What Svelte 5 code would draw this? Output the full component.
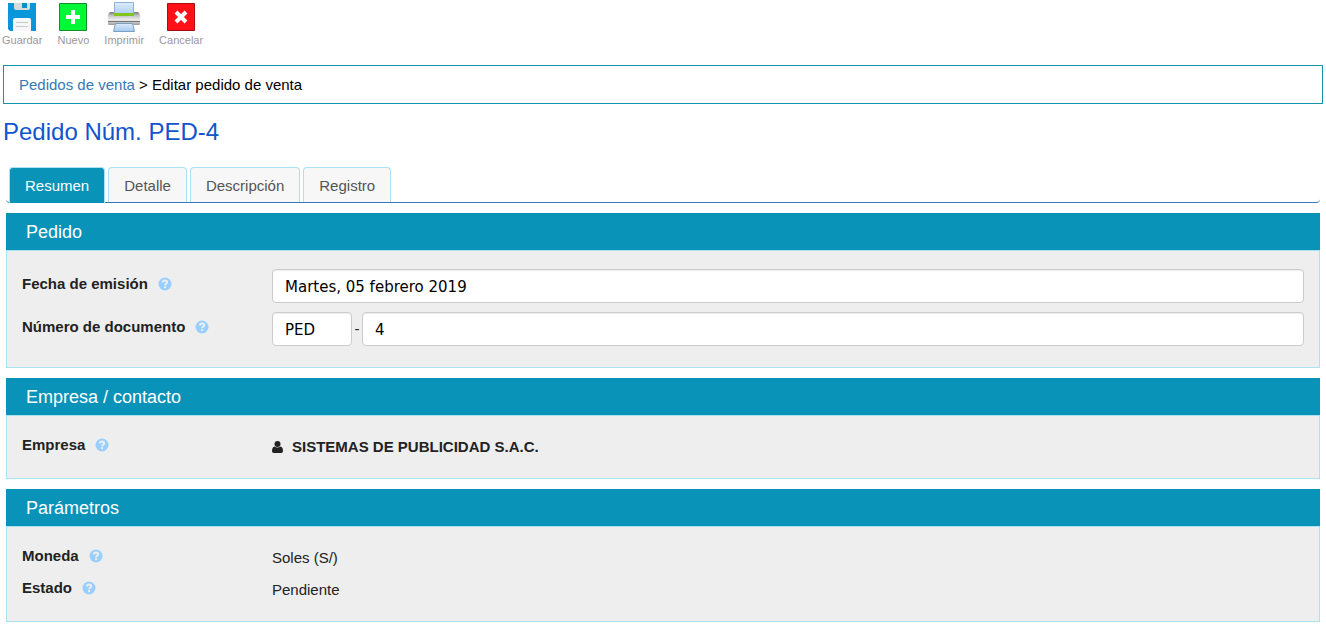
<script>
  const tabs = ['Resumen', 'Detalle', 'Descripción', 'Registro'];
  let active = $state('Resumen');
  let fecha = $state('Martes, 05 febrero 2019');
  let serie = $state('PED');
  let numero = $state('4');
</script>

{#snippet help()}
  <svg class="help" viewBox="0 0 14 14" aria-hidden="true">
    <circle cx="7" cy="7" r="6.5" fill="#99cfff" />
    <path d="M4.9 5.4C5 4 5.900 3.500 7 3.500c1.300 0 2.100.7 2.100 1.700 0 1.500-2 1.500-2 3.100" fill="none" stroke="#eee" stroke-width="2" />
    <rect x="6.100" y="9.200" width="2" height="1.900" fill="#eee" />
  </svg>
{/snippet}

<header class="toolbar">
  <button type="button">
    <svg viewBox="0 0 32 32" aria-hidden="true">
      <path d="M2 3h28v28H4l-2-2z" fill="#0a97d9" />
      <path d="M8 3h16v5q0 2-2 2H10q-2 0-2-2z" fill="#d5dadd" />
      <path d="M16 3h5v5h-5z" fill="#0a8fcb" />
      <path d="M7 20q0-2 2-2h14q2 0 2 2v11H7z" fill="#f6f7f8" />
      <path d="M10 22.500h12M10 26.500h12" stroke="#c5cbcf" />
      <path d="M3 28h1v1H3zM28 28h1v1h-1z" fill="#07679b" />
    </svg>
    Guardar
  </button>
  <button type="button">
    <svg viewBox="0 0 32 32" aria-hidden="true">
      <path d="M2.500 3.500h27v27h-27z" fill="#00f837" stroke="#168c2f" />
      <path d="M14 10h4v5h5v4h-5v5h-4v-5H9v-4h5z" fill="#fff" />
    </svg>
    Nuevo
  </button>
  <button type="button">
    <svg viewBox="0 0 32 32" aria-hidden="true">
      <defs>
        <linearGradient id="paper" x2="0" y2="1">
          <stop stop-color="#dcebfa" /><stop offset="1" stop-color="#a3c9ee" />
        </linearGradient>
        <linearGradient id="case" x2="0" y2="1">
          <stop stop-color="#777" /><stop offset=".25" stop-color="#c0c0c0" />
          <stop offset=".6" stop-color="#eee" /><stop offset="1" stop-color="#999" />
        </linearGradient>
      </defs>
      <path d="M6.500 2.500h19v14h-19z" fill="url(#paper)" stroke="#8fb2d6" />
      <path d="M2 12h4v4h20v-4h4q2 1 2 4v8q0 1-1 1H1q-1 0-1-1v-8q0-3 2-4z" fill="url(#case)" />
      <path d="M6 13h20v3H6z" fill="#82c51c" />
      <path d="M0 21.500h32" stroke="#777" />
      <path d="M7.500 23.500h17l2 8h-21z" fill="url(#paper)" stroke="#7b9fc5" />
    </svg>
    Imprimir
  </button>
  <button type="button">
    <svg viewBox="0 0 32 32" aria-hidden="true">
      <path d="M2.500 3.500h27v27h-27z" fill="#ff1117" stroke="#a80d11" />
      <path d="M11 12l10 10M21 12L11 22" stroke="#fff" stroke-width="4" />
    </svg>
    Cancelar
  </button>
</header>

<nav class="breadcrumb" aria-label="Ruta">
  <a href="#pedidos">Pedidos de venta</a> &gt; Editar pedido de venta
</nav>

<h1>Pedido Núm. PED-4</h1>

<main>
  <div class="tabs" role="tablist">
    {#each tabs as tab}
      <button type="button" role="tab" aria-selected={active === tab} class:active={active === tab} onclick={() => (active = tab)}>{tab}</button>
    {/each}
  </div>

  <section>
    <h2>Pedido</h2>
    <div class="body">
      <div class="row field">
        <div class="label"><label for="fecha">Fecha de emisión</label>{@render help()}</div>
        <div class="value"><input id="fecha" type="text" bind:value={fecha} /></div>
      </div>
      <div class="row field">
        <div class="label"><label for="numero">Número de documento</label>{@render help()}</div>
        <div class="value">
          <input class="serie" type="text" aria-label="Serie" bind:value={serie} />
          <span class="dash">-</span>
          <input id="numero" type="text" bind:value={numero} />
        </div>
      </div>
    </div>
  </section>

  <section>
    <h2>Empresa / contacto</h2>
    <div class="body">
      <div class="row">
        <div class="label">Empresa{@render help()}</div>
        <div class="value company">
          <svg viewBox="0 0 12 14" aria-hidden="true">
            <circle cx="5.500" cy="3.900" r="3" fill="#222" />
            <path d="M2.500 6.500q3 2.200 6 0Q11 7 11 11q0 2-1.700 2H1.700Q0 13 0 11q0-4 2.500-4.500z" fill="#222" />
          </svg>
          <strong>SISTEMAS DE PUBLICIDAD S.A.C.</strong>
        </div>
      </div>
    </div>
  </section>

  <section>
    <h2>Parámetros</h2>
    <div class="body">
      <div class="row">
        <div class="label">Moneda{@render help()}</div>
        <div class="value">Soles (S/)</div>
      </div>
      <div class="row">
        <div class="label">Estado{@render help()}</div>
        <div class="value">Pendiente</div>
      </div>
    </div>
  </section>
</main>

<style>
  :global(body) {
    margin: 0;
    background: #fff;
    color: #222;
    font: 15px/20px "Liberation Sans", Arial, sans-serif;
  }
  .toolbar {
    display: flex;
    gap: 15px;
    padding: 0 2px;
  }
  .toolbar button {
    display: flex;
    flex-direction: column;
    align-items: center;
    padding: 0;
    border: 0;
    background: none;
    color: #999;
    font: 11px/16px "Liberation Sans", Arial, sans-serif;
    cursor: pointer;
  }
  .toolbar svg {
    width: 32px;
    height: 32px;
  }
  .breadcrumb {
    margin: 17px 3px 0;
    padding: 9px 15px 8px;
    border: 1px solid #1593ad;
    color: #000;
    line-height: 20px;
  }
  .breadcrumb a {
    color: #337ab7;
    text-decoration: none;
  }
  h1 {
    margin: 14px 3px 0;
    color: #1155cc;
    font-size: 24px;
    line-height: 28px;
    font-weight: 400;
  }
  main {
    padding: 0 6px;
  }
  .tabs {
    display: flex;
    gap: 3px;
    margin-top: 21px;
    padding: 0 3px;
    border-bottom: 1px solid #337ab7;
    border-radius: 4px;
  }
  .tabs button {
    height: 35px;
    padding: 2px 15px 0;
    border: 1px solid #aae2f4;
    border-bottom: 0;
    border-radius: 4px 4px 0 0;
    background: #f7f7f7;
    color: #555;
    font: inherit;
    cursor: pointer;
  }
  .tabs button.active {
    height: 36px;
    margin-bottom: -1px;
    padding-top: 0;
    background: #0a93b8;
    color: #fff;
  }
  section {
    margin-top: 10px;
  }
  h2 {
    margin: 0;
    padding: 1px 20px 0;
    background: #0a93b8;
    color: #fff;
    font-size: 18px;
    line-height: 36px;
    font-weight: 400;
  }
  .body {
    display: grid;
    gap: 9px;
    padding: 18px 15px 21px;
    border: 1px solid #aae2f0;
    background: #eee;
  }
  .row {
    display: grid;
    grid-template-columns: 250px 1fr;
    align-items: start;
  }
  .label {
    display: flex;
    align-items: center;
    gap: 10px;
    min-height: 20px;
    padding-top: 1px;
    font-weight: 700;
  }
  .field .label {
    padding-top: 5px;
  }
  .help {
    width: 14px;
    height: 14px;
  }
  .value {
    display: flex;
    align-items: center;
    padding-top: 3px;
  }
  .field .value {
    padding-top: 0;
  }
  input {
    box-sizing: border-box;
    flex: 1;
    min-width: 0;
    height: 34px;
    padding: 2px 12px 0;
    border: 1px solid #ccc;
    border-radius: 4px;
    background: #fff;
    box-shadow: inset 0 1px 1px rgb(0 0 0 / 8%);
    color: #000;
    font: 15px "DejaVu Sans", Verdana, sans-serif;
  }
  .serie {
    flex: 0 0 80px;
  }
  .dash {
    width: 10px;
    text-align: center;
  }
  .company svg {
    width: 12px;
    height: 14px;
    margin-right: 8px;
  }
</style>
